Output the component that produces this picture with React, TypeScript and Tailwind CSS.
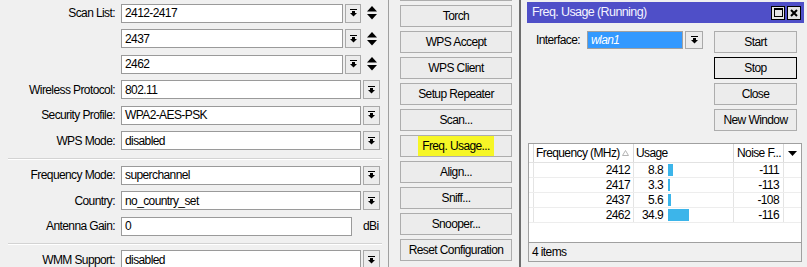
import React from 'react';

const FONT = "font-['Liberation_Sans',Arial,sans-serif]";

function DropIcon() {
  return (
    <svg width="7" height="8" viewBox="0 0 7 8">
      <rect x="0" y="0" width="7" height="1" fill="#000" />
      <rect x="2" y="2" width="3" height="2" fill="#000" />
      <path d="M0 4h7L3.5 7.5z" fill="#000" />
    </svg>
  );
}

function UpDownIcon() {
  return (
    <svg width="10" height="14" viewBox="0 0 10 14">
      <path d="M5 0L10 5.5H0z" fill="#000" />
      <path d="M0 8h10L5 13.5z" fill="#000" />
    </svg>
  );
}

function DropBtn({ className = 'w-[17px]' }: { className?: string }) {
  return (
    <div className={`${className} h-[19px] ml-[2px] border border-[#a9a9a9] bg-[#ececec] flex items-center justify-center`}>
      <DropIcon />
    </div>
  );
}

function Row({
  label,
  value,
  scan,
  suffix,
}: {
  label?: string;
  value: string;
  scan?: boolean;
  suffix?: string;
}) {
  const inputW = scan ? 'w-[222px]' : suffix ? 'w-[231px]' : 'w-[240px]';
  return (
    <div className="flex items-center h-[19px]">
      <div className="w-[115px] text-right whitespace-nowrap">{label}</div>
      <div className={`${inputW} ml-[6px] h-[19px] border border-[#9a9a9a] bg-white pl-[3px] flex items-center whitespace-nowrap`}>
        {value}
      </div>
      {suffix ? (
        <span className="ml-[11px]">{suffix}</span>
      ) : (
        <DropBtn className={scan ? 'w-[16px]' : 'w-[17px]'} />
      )}
      {scan && (
        <div className="ml-[6px] flex items-center">
          <UpDownIcon />
        </div>
      )}
    </div>
  );
}

function Sep({ className }: { className: string }) {
  return <div className={`${className} ml-[8px] w-[374px] h-[2px] border-t border-[#d3d3d3] border-b border-b-white`} />;
}

const actions = [
  '',
  'Torch',
  'WPS Accept',
  'WPS Client',
  'Setup Repeater',
  'Scan...',
  'Freq. Usage...',
  'Align...',
  'Sniff...',
  'Snooper...',
  'Reset Configuration',
];

const rows = [
  { freq: 2412, usage: '8.8', bar: 5, noise: -111 },
  { freq: 2417, usage: '3.3', bar: 2, noise: -113 },
  { freq: 2437, usage: '5.6', bar: 3, noise: -108 },
  { freq: 2462, usage: '34.9', bar: 21, noise: -116 },
];

function WinButton({ label, focused }: { label: string; focused?: boolean }) {
  return (
    <div
      className={`h-[22px] w-[83px] flex items-center justify-center bg-[#ececec] border ${
        focused ? 'border-black' : 'border-[#adadad]'
      }`}
    >
      {label}
    </div>
  );
}

export default function App() {
  return (
    <div className={`${FONT} text-[12px] tracking-[-0.6px] leading-none text-black w-[807px] h-[267px] bg-[#f0f0f0] flex overflow-hidden`}>
      {/* Settings form */}
      <div className="w-[388px] shrink-0 flex flex-col pt-[3.5px]">
        <div className="flex flex-col gap-[6.5px]">
          <Row label="Scan List:" value="2412-2417" scan />
          <Row value="2437" scan />
          <Row value="2462" scan />
          <Row label="Wireless Protocol:" value="802.11" />
          <Row label="Security Profile:" value="WPA2-AES-PSK" />
          <Row label="WPS Mode:" value="disabled" />
        </div>
        <Sep className="mt-[7.5px]" />
        <div className="mt-[6px] flex flex-col gap-[6.5px]">
          <Row label="Frequency Mode:" value="superchannel" />
          <Row label="Country:" value="no_country_set" />
          <Row label="Antenna Gain:" value="0" suffix="dBi" />
        </div>
        <Sep className="mt-[7px]" />
        <div className="mt-[5.5px]">
          <Row label="WMM Support:" value="disabled" />
        </div>
      </div>

      <div className="w-px h-full bg-[#a0a0a0] shrink-0" />

      {/* Action buttons */}
      <div className="pl-[11px] w-[124px] shrink-0 flex flex-col gap-[4px] -mt-[21px]">
        {actions.map((a, i) => (
          <div
            key={i}
            className="h-[22px] w-[112px] shrink-0 border border-[#adadad] bg-[#ececec] flex items-center justify-center whitespace-nowrap"
          >
            {a === 'Freq. Usage...' ? (
              <span className="bg-[#f6f626] px-[4px] py-[4px] -mx-[4px]">{a}</span>
            ) : (
              a
            )}
          </div>
        ))}
      </div>

      {/* Freq. Usage window */}
      <div className="ml-[6px] w-[289px] h-full shrink-0 flex flex-col border-l-2 border-[#6e6e6e] pl-[6px] pr-[4px] pt-[2px] bg-[#f0f0f0]">
        <div className="h-[21px] bg-[#4f4fc8] flex items-center pl-[5px] pr-[3px]">
          <span className="flex-1 text-[#f4f4ff] whitespace-nowrap text-[12.5px]">Freq. Usage (Running)</span>
          <div className="w-[14px] h-[14px] border border-black bg-[#e4e4e4] flex items-center justify-center">
            <svg width="9" height="9" viewBox="0 0 9 9">
              <rect x="0.5" y="0.5" width="8" height="8" fill="none" stroke="#000" />
              <rect x="0" y="0" width="9" height="2" fill="#000" />
            </svg>
          </div>
          <div className="ml-[2px] w-[14px] h-[14px] border border-black bg-[#e4e4e4] flex items-center justify-center">
            <svg width="8" height="8" viewBox="0 0 8 8">
              <path d="M1 1L7 7M7 1L1 7" stroke="#000" strokeWidth="2" />
            </svg>
          </div>
        </div>

        <div className="flex-1 flex flex-col">
          <div className="flex pt-[8px]">
            <div className="flex items-center h-[18px] pl-[9px]">
              <span className="w-[51px]">Interface:</span>
              <div className="w-[96px] h-[18px] border border-[#a0a0a0] bg-[#3399ff] flex items-center pl-[3px] text-white italic">
                wlan1
              </div>
              <div className="ml-[2px] w-[18px] h-[18px] border border-[#a9a9a9] bg-[#ececec] flex items-center justify-center">
                <DropIcon />
              </div>
            </div>
            <div className="ml-[11px] flex flex-col gap-[4px]">
              <WinButton label="Start" />
              <WinButton label="Stop" focused />
              <WinButton label="Close" />
              <WinButton label="New Window" />
            </div>
          </div>

          <div className="mt-[12px] ml-[1px] w-[274px] h-[119px] flex flex-col border border-[#a0a0a0] bg-white">
            <div className="h-[19px] flex border-b border-[#e2e2e2] shrink-0 whitespace-nowrap">
              <div className="w-[5px] border-r border-[#d8d8d8]" />
              <div className="w-[100px] border-r border-[#d8d8d8] flex items-center justify-between pl-[2px] pr-[4px]">
                <span>Frequency (MHz)</span>
                <svg width="7" height="6" viewBox="0 0 7 6">
                  <path d="M3.5 0.5L6.5 5.5H0.5z" fill="none" stroke="#b4b4b4" />
                </svg>
              </div>
              <div className="w-[100px] border-r border-[#d8d8d8] flex items-center pl-[2px]">Usage</div>
              <div className="w-[50px] border-r border-[#d8d8d8] flex items-center pl-[3px] overflow-hidden">Noise F...</div>
              <div className="flex-1 flex items-center justify-center">
                <svg width="9" height="5" viewBox="0 0 9 5">
                  <path d="M0 0h9L4.5 5z" fill="#000" />
                </svg>
              </div>
            </div>
            <div className="flex-1 flex flex-col">
              {rows.map((r) => (
                <div key={r.freq} className="h-[15px] flex border-b border-[#ededed]">
                  <div className="w-[5px] border-r border-[#e4e4e4]" />
                  <div className="w-[100px] border-r border-[#e4e4e4] flex items-center justify-end pr-[3px]">{r.freq}</div>
                  <div className="w-[100px] border-r border-[#e4e4e4] flex items-center">
                    <span className="w-[29px] text-right">{r.usage}</span>
                    <div className="ml-[5px] h-[12px] bg-[#3cb5ea]" style={{ width: r.bar }} />
                  </div>
                  <div className="w-[50px] border-r border-[#e4e4e4] flex items-center justify-end pr-[4px]">{r.noise}</div>
                  <div className="flex-1" />
                </div>
              ))}
            </div>
            <div className="h-[19px] shrink-0 border-t border-[#a0a0a0] bg-[#f0f0f0] flex items-center pl-[3px]">4 items</div>
          </div>
        </div>
      </div>
    </div>
  );
}
